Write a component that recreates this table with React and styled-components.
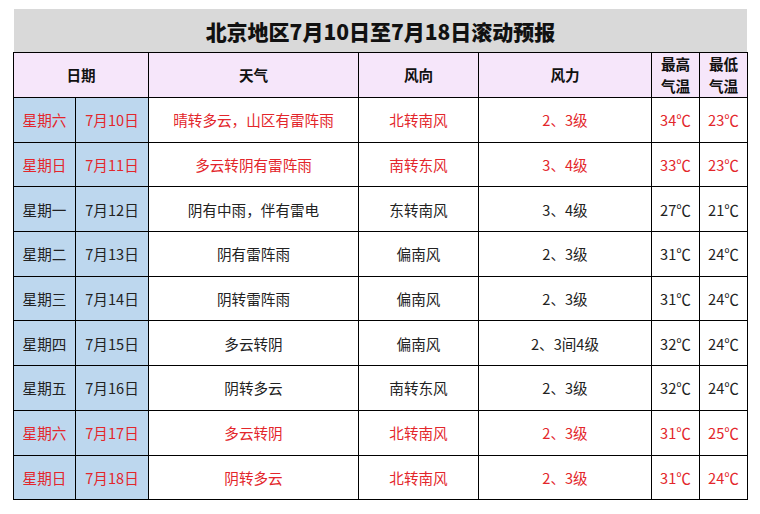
import React from 'react'
import styled, { createGlobalStyle } from 'styled-components'

const GlobalStyle = createGlobalStyle`
body {
  margin: 0;
  background: #fff;
  font-family: "Microsoft YaHei", "Noto Sans CJK SC", sans-serif;
}
`

const Page = styled.div`
padding: 9px 0 0 13px;
width: 734px;
`

const TitleBar = styled.div`
margin-left: 1px;
height: 43px;
background: #d9d9d9;
display: flex;
align-items: center;
justify-content: center;
font-size: 21px;
font-weight: 900;
color: #111;
`

const Table = styled.table`
border-collapse: collapse;
table-layout: fixed;
width: 734px;
font-size: 14.6px;
`

const HeadCell = styled.th`
height: 44px;
padding: 0;
background: #f6e6fa;
border: 1px solid #000;
font-weight: bold;
color: #111;
text-align: center;
line-height: 22px;
`

const Cell = styled.td`
height: 43.7px;
padding: 0;
border: 1px solid #000;
text-align: center;
background: ${p => (p.blue ? '#bdd7ee' : '#fff')};
color: ${p => (p.red ? '#e3262b' : '#222')};
white-space: nowrap;
`

const widths = [62, 73, 210, 120, 173, 48, 48]

const rows = [
  ['星期六', '7月10日', '晴转多云，山区有雷阵雨', '北转南风', '2、3级', '34℃', '23℃', true],
  ['星期日', '7月11日', '多云转阴有雷阵雨', '南转东风', '3、4级', '33℃', '23℃', true],
  ['星期一', '7月12日', '阴有中雨，伴有雷电', '东转南风', '3、4级', '27℃', '21℃', false],
  ['星期二', '7月13日', '阴有雷阵雨', '偏南风', '2、3级', '31℃', '24℃', false],
  ['星期三', '7月14日', '阴转雷阵雨', '偏南风', '2、3级', '31℃', '24℃', false],
  ['星期四', '7月15日', '多云转阴', '偏南风', '2、3间4级', '32℃', '24℃', false],
  ['星期五', '7月16日', '阴转多云', '南转东风', '2、3级', '32℃', '24℃', false],
  ['星期六', '7月17日', '多云转阴', '北转南风', '2、3级', '31℃', '25℃', true],
  ['星期日', '7月18日', '阴转多云', '北转南风', '2、3级', '31℃', '24℃', true],
]

const App = () => {
  return (
    <Page>
      <GlobalStyle />
      <TitleBar>北京地区7月10日至7月18日滚动预报</TitleBar>
      <Table>
        <colgroup>
          {widths.map((w, i) => (
            <col key={i} style={{ width: w }} />
          ))}
        </colgroup>
        <thead>
          <tr>
            <HeadCell colSpan={2}>日期</HeadCell>
            <HeadCell>天气</HeadCell>
            <HeadCell>风向</HeadCell>
            <HeadCell>风力</HeadCell>
            <HeadCell>最高<br />气温</HeadCell>
            <HeadCell>最低<br />气温</HeadCell>
          </tr>
        </thead>
        <tbody>
          {rows.map((r, i) => (
            <tr key={i}>
              <Cell blue red={r[7]}>{r[0]}</Cell>
              <Cell blue red={r[7]}>{r[1]}</Cell>
              <Cell red={r[7]}>{r[2]}</Cell>
              <Cell red={r[7]}>{r[3]}</Cell>
              <Cell red={r[7]}>{r[4]}</Cell>
              <Cell red={r[7]}>{r[5]}</Cell>
              <Cell red={r[7]}>{r[6]}</Cell>
            </tr>
          ))}
        </tbody>
      </Table>
    </Page>
  )
}

export default App
